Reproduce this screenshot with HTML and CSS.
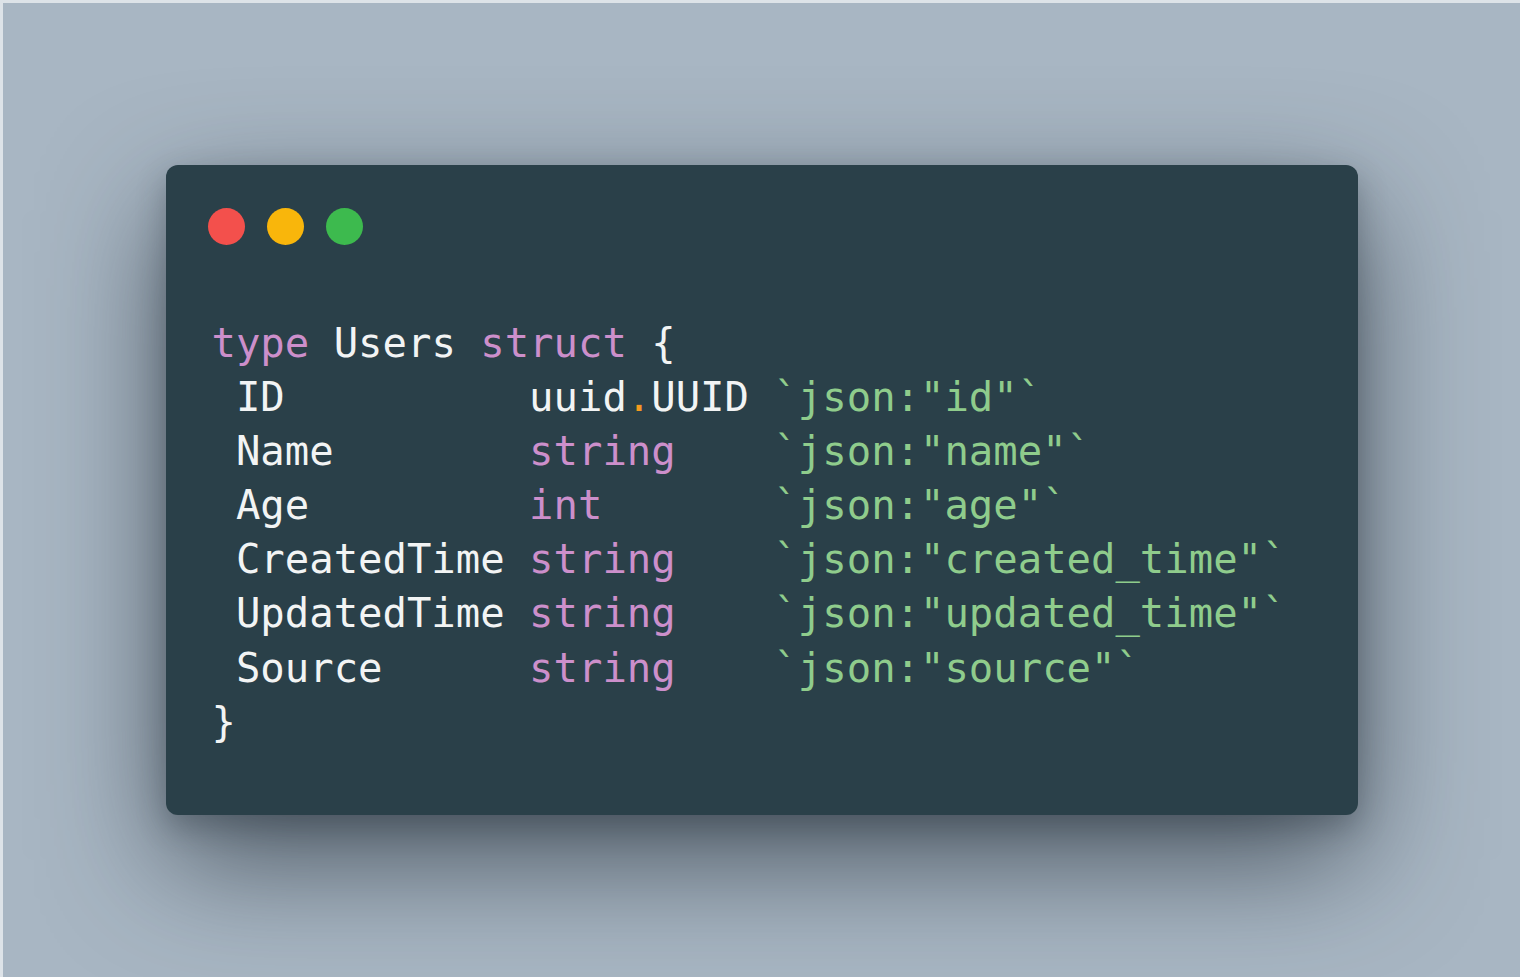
FILE: index.html
```html
<!DOCTYPE html>
<html lang="en">
<head>
<meta charset="utf-8">
<title>Users struct</title>
<link rel="stylesheet" href="styles.css">
</head>
<body>
<div class="frame">
  <div class="card">
    <div class="dots">
      <span class="dot red"></span>
      <span class="dot yellow"></span>
      <span class="dot green"></span>
    </div>
<pre class="code"><span class="kw">type</span> Users <span class="kw">struct</span> {
 ID          uuid<span class="dotop">.</span>UUID <span class="tag">`json:"id"`</span>
 Name        <span class="kw">string</span>    <span class="tag">`json:"name"`</span>
 Age         <span class="kw">int</span>       <span class="tag">`json:"age"`</span>
 CreatedTime <span class="kw">string</span>    <span class="tag">`json:"created_time"`</span>
 UpdatedTime <span class="kw">string</span>    <span class="tag">`json:"updated_time"`</span>
 Source      <span class="kw">string</span>    <span class="tag">`json:"source"`</span>
}</pre>
  </div>
</div>
</body>
</html>
```
FILE: styles.css
```css
html, body {
  margin: 0;
  padding: 0;
  height: 100%;
}
body {
  background: #dde3e8;
  overflow: hidden;
}
.frame {
  box-sizing: border-box;
  margin: 3px 0 0 3px;
  height: calc(100% - 3px);
  background: #a8b6c3;
  display: flex;
  justify-content: center;
  padding-top: 162px;
}
.card {
  box-sizing: border-box;
  width: 1192px;
  height: 650px;
  background: #2a4049;
  border-radius: 12px;
  box-shadow: 0 45px 120px rgba(35, 45, 56, 0.7), 0 12px 30px rgba(35, 45, 56, 0.3);
  padding: 43px 0 0 42px;
}
.dots {
  display: flex;
  gap: 22px;
}
.dot {
  width: 37px;
  height: 37px;
  border-radius: 50%;
}
.red { background: #f3504c; }
.yellow { background: #f9b60b; }
.green { background: #3dba4e; }
.code {
  margin: 71px 0 0 4px;
  font-family: "DejaVu Sans Mono", monospace;
  font-size: 40.6px;
  line-height: 54.1px;
  color: #f2f4f4;
}
.kw { color: #cc8fcb; }
.tag { color: #8fcc8c; }
.dotop { color: #f59a20; }
```
